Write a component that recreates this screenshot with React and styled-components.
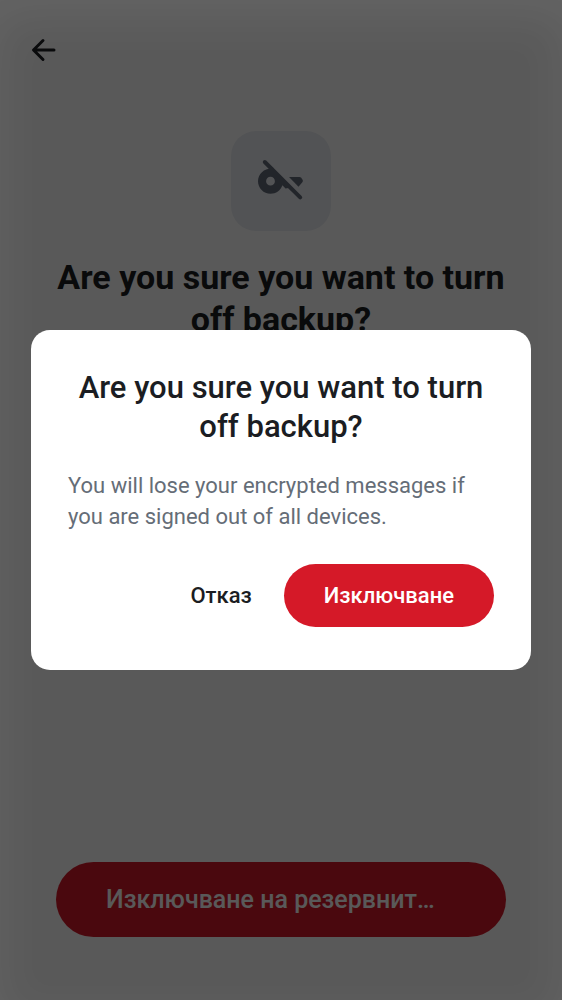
import React from "react";
import styled, { createGlobalStyle } from "styled-components";

const GlobalStyle = createGlobalStyle`
  * { box-sizing: border-box; }
  html, body { margin: 0; background: #fff; }
  body, button { font-family: Roboto, "Noto Sans", sans-serif; }
`;

const Screen = styled.main`
  min-height: 100vh;
  display: flex;
  flex-direction: column;
  color: #1b1d22;
`;

const TopBar = styled.header`
  display: flex;
  align-items: center;
  height: 100px;
  padding: 0 25px;
`;

const IconButton = styled.button`
  display: flex;
  padding: 0;
  border: 0;
  background: none;
  color: inherit;
`;

const Content = styled.section`
  flex: 1;
  display: flex;
  flex-direction: column;
  align-items: center;
  gap: 25px;
  padding: 31px 50px;
`;

const IconTile = styled.div`
  display: grid;
  place-items: center;
  width: 100px;
  height: 100px;
  border-radius: 25px;
  background: #ebeef2;
  color: #626a7a;
`;

const PageTitle = styled.h1`
  margin: 0;
  font-size: 34px;
  line-height: 42px;
  font-weight: 700;
  text-align: center;
`;

const Footer = styled.footer`
  display: flex;
  padding: 0 56px 63px;
`;

const Button = styled.button`
  border: 0;
  border-radius: 40px;
  font-weight: 500;
  white-space: nowrap;
  font-size: ${(p) => (p.$large ? 25 : 22)}px;
  height: ${(p) => (p.$large ? 75 : 63)}px;
  padding: 0 ${(p) => (p.$large ? 50 : p.$filled ? 40 : 32)}px;
  flex: ${(p) => (p.$large ? "1" : "none")};
  text-align: ${(p) => (p.$large ? "left" : "center")};
  background: ${(p) => (p.$filled ? "#d51928" : "transparent")};
  color: ${(p) => (p.$filled ? "#fff" : "#1b1d22")};
`;

const Backdrop = styled.div`
  position: fixed;
  inset: 0;
  display: flex;
  align-items: center;
  padding: 31px;
  background: rgba(0, 0, 0, 0.65);
  box-shadow: inset 0 18px 44px 0 rgba(255, 255, 255, 0.06);
`;

const Dialog = styled.div`
  flex: 1;
  padding: 38px 37px 43px;
  border-radius: 19px;
  background: #fff;
`;

const DialogTitle = styled.h2`
  margin: 0 0 24px;
  font-size: 31px;
  line-height: 39px;
  font-weight: 500;
  text-align: center;
  color: #1b1d22;
`;

const DialogText = styled.p`
  margin: 0 0 32px;
  font-size: 22px;
  line-height: 31px;
  color: #656d77;
`;

const Actions = styled.div`
  display: flex;
  justify-content: flex-end;
`;

function BackIcon() {
  return (
    <svg width="38" height="38" viewBox="0 0 38 38" fill="none" stroke="currentColor" strokeWidth="3" strokeLinecap="round" strokeLinejoin="round" aria-hidden="true">
      <path d="M29 19H9M18 9.500L8.500 19L18 28.500" />
    </svg>
  );
}

function KeyOffIcon() {
  return (
    <svg width="50" height="50" viewBox="0 0 50 50" aria-hidden="true">
      <path fill="currentColor" fillRule="evenodd" d="M18 12.600C9.500 11.200 2 17 2 25.200C2 32 7.500 37.800 14.500 37.800C20 37.800 24.700 34.500 26.400 29.300L29.500 32.600L32.500 32L36 35.500L15 10ZM14.500 20.800A4.400 4.400 0 1 1 14.500 29.600A4.400 4.400 0 1 1 14.500 20.800Z" />
      <path fill="currentColor" d="M33 21H43.500Q44.500 21 45.200 21.800L46.700 24Q47.200 25 46.500 26L42.500 30.800Z" />
      <path fill="none" stroke="currentColor" strokeWidth="4" strokeLinecap="round" d="M8.800 6L44.200 41.400" />
    </svg>
  );
}

export default function App() {
  return (
    <>
      <GlobalStyle />
      <Screen>
        <TopBar>
          <IconButton type="button" aria-label="Back">
            <BackIcon />
          </IconButton>
        </TopBar>
        <Content>
          <IconTile>
            <KeyOffIcon />
          </IconTile>
          <PageTitle>Are you sure you want to turn off backup?</PageTitle>
        </Content>
        <Footer>
          <Button type="button" $large $filled>Изключване на резервнит…</Button>
        </Footer>
      </Screen>
      <Backdrop>
        <Dialog role="dialog" aria-modal="true" aria-labelledby="dialog-title">
          <DialogTitle id="dialog-title">Are you sure you want to turn off backup?</DialogTitle>
          <DialogText>You will lose your encrypted messages if you are signed out of all devices.</DialogText>
          <Actions>
            <Button type="button">Отказ</Button>
            <Button type="button" $filled>Изключване</Button>
          </Actions>
        </Dialog>
      </Backdrop>
    </>
  );
}
